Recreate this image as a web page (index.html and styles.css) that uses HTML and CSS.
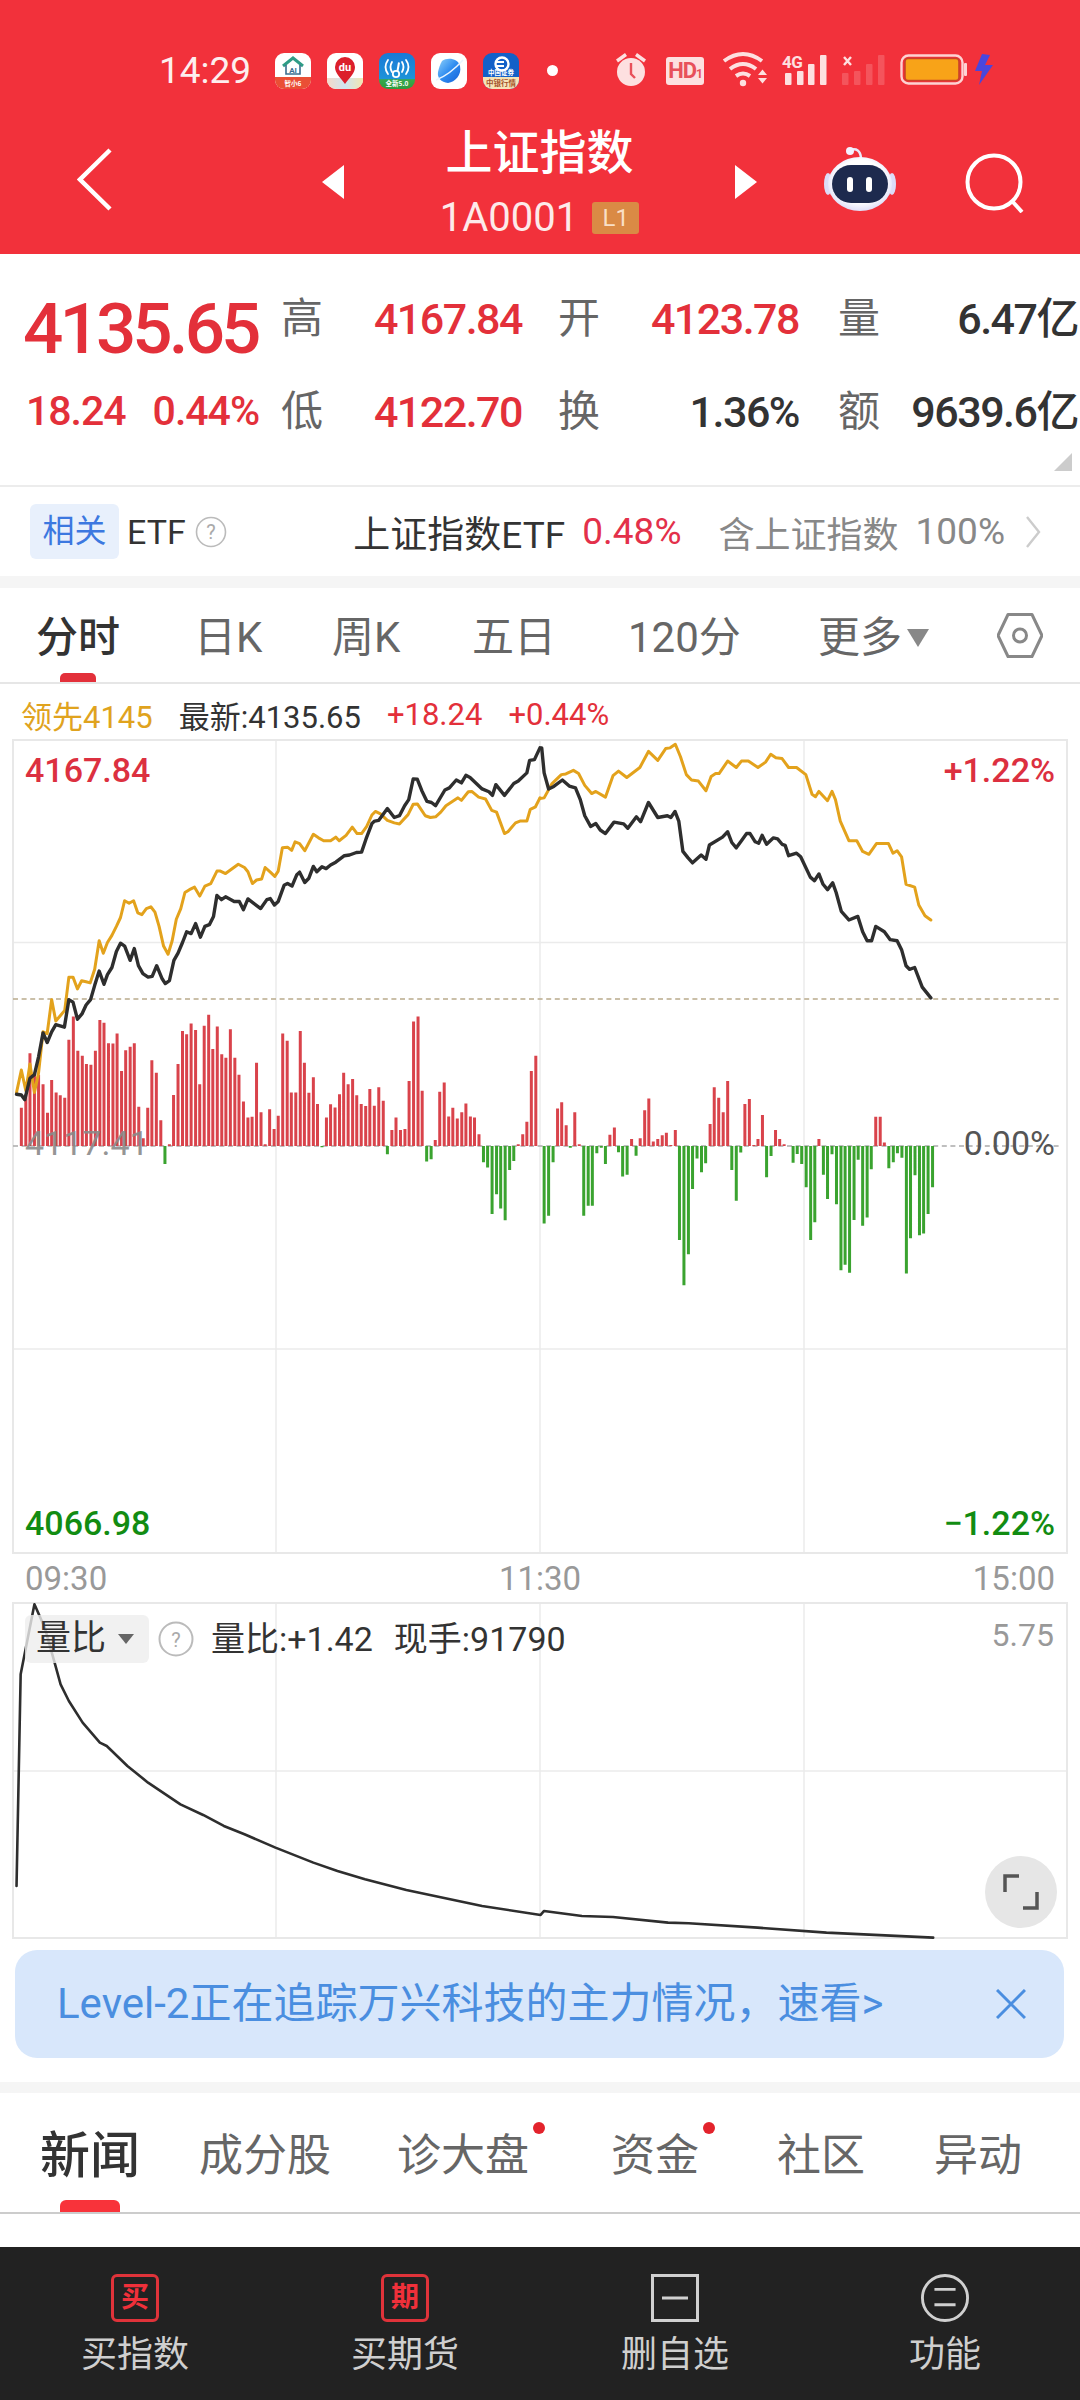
FILE: index.html
```html
<!DOCTYPE html>
<html lang="zh">
<head>
<meta charset="utf-8">
<title>上证指数</title>
<link rel="stylesheet" href="styles.css">
</head>
<body>
<div class="page">
  <header class="top">
    <div class="status">
      <span class="clock">14:29</span>
      <div class="apps">
        <svg class="app" viewBox="0 0 36 36"><rect width="36" height="36" rx="9" fill="#fff"/><path d="M0 24H36V27a9 9 0 0 1-9 9H9a9 9 0 0 1-9-9Z" fill="#ea4f35"/><path d="M8 13 18 5l10 8" fill="none" stroke="#2f9c86" stroke-width="3"/><path d="M11 12V21H25V12" fill="none" stroke="#3a6f8f" stroke-width="1.6"/><text x="18" y="20" class="tiny-ai">AI</text><text x="18" y="33" class="tiny-w">智小6</text></svg>
        <svg class="app" viewBox="0 0 36 36"><defs><linearGradient id="duB" x1="0" x2="1"><stop offset="0" stop-color="#f6d9c8"/><stop offset=".5" stop-color="#cfe4f1"/><stop offset="1" stop-color="#f3e6b0"/></linearGradient></defs><rect width="36" height="36" rx="9" fill="#fff"/><path d="M0 25H36V27a9 9 0 0 1-9 9H9a9 9 0 0 1-9-9Z" fill="url(#duB)"/><path d="M18 31C13 24 8 20 8 14a10 10 0 0 1 20 0c0 6-5 10-10 17Z" fill="#dc1f2b"/><text x="18" y="17.5" class="tiny-du">du</text></svg>
        <svg class="app" viewBox="0 0 36 36"><defs><linearGradient id="wfB" x1="0" y1="0" x2="0" y2="1"><stop offset="0" stop-color="#1b79d6"/><stop offset=".72" stop-color="#1d93d9"/><stop offset=".74" stop-color="#38a84a"/><stop offset="1" stop-color="#2f9a3e"/></linearGradient></defs><rect width="36" height="36" rx="9" fill="url(#wfB)"/><path d="M9 7Q4 14 9 21M13 9Q10 14 13 19M27 7Q32 14 27 21M23 9Q26 14 23 19" fill="none" stroke="#fff" stroke-width="1.8" stroke-linecap="round"/><circle cx="17" cy="21" r="3.2" fill="none" stroke="#fff" stroke-width="1.8"/><path d="M18.5 18 20 9.5" stroke="#fff" stroke-width="2"/><text x="18" y="33" class="tiny-w">全新5.0</text></svg>
        <svg class="app" viewBox="0 0 36 36"><defs><linearGradient id="plB" x1="0" y1="0" x2="1" y2="1"><stop offset="0" stop-color="#8ed0fa"/><stop offset=".5" stop-color="#2f8cf0"/><stop offset="1" stop-color="#1560d8"/></linearGradient></defs><rect width="36" height="36" rx="9" fill="#fff"/><path d="M11 8C16 4 27 5 29 13 31 22 24 29 17 30 10 29 6 25 7 19 8 15 9 11 11 8Z" fill="url(#plB)"/><path d="M5 27C13 24 23 17 32 7" stroke="#e9f4ff" stroke-width="1.4" fill="none"/></svg>
        <svg class="app" viewBox="0 0 36 36"><rect width="36" height="36" rx="9" fill="#1360c8"/><path d="M0 24H36V27a9 9 0 0 1-9 9H9a9 9 0 0 1-9-9Z" fill="#f6e4b8"/><circle cx="19" cy="11" r="6.5" fill="none" stroke="#fff" stroke-width="2.4"/><path d="M12 9H21M12 13H21" stroke="#fff" stroke-width="1.8"/><text x="18" y="22" class="tiny-w">中国证券</text><text x="18" y="33" class="tiny-b">中银行情</text></svg>
      </div>
      <span class="notif-dot"></span>
      <svg class="sys" viewBox="615 52 378 40">
        <g fill="#fde0e0">
          <circle cx="631" cy="73" r="14"/>
          <path d="M617 62 626 55.5M645 62 636 55.5" stroke="#fde0e0" stroke-width="3.4" fill="none"/>
          <rect x="666" y="58" width="38" height="28" rx="3"/>
          <circle cx="743" cy="84" r="3.2"/>
          <path d="M758 76 762.500 70.500 767 76ZM758 79 762.500 84.500 767 79Z"/>
          <path d="M724 62Q743 48 762 62M730 70Q743 60 756 70M736 77Q743 72 750 77" fill="none" stroke="#fde0e0" stroke-width="4"/>
          <rect x="785" y="74" width="6.500" height="12" rx="1"/><rect x="797" y="72" width="6.500" height="14" rx="1"/><rect x="808" y="65" width="6.500" height="21" rx="1"/><rect x="820" y="56" width="6.500" height="30" rx="1"/>
        </g>
        <path d="M631 64V75L635 79" fill="none" stroke="#e8505a" stroke-width="2.400"/>
        <text x="685" y="79" class="sys-hd">HD<tspan class="sys-hd1">1</tspan></text>
        <text x="782" y="69" class="sys-4g">4G</text>
        <g fill="#fde0e0" opacity=".2"><rect x="842" y="74" width="6.500" height="12" rx="1"/><rect x="854" y="72" width="6.500" height="14" rx="1"/><rect x="866" y="65" width="6.500" height="21" rx="1"/><rect x="878" y="56" width="6.500" height="30" rx="1"/></g>
        <path d="M844 58 851 66M851 58 844 66" stroke="#fde0e0" stroke-width="2.400"/>
        <rect x="901.500" y="56.500" width="61" height="28" rx="7" fill="none" stroke="#fdd3d3" stroke-width="2.400"/>
        <rect x="905" y="59.500" width="54" height="22" rx="3" fill="#f8a318" stroke="#c9432a" stroke-width="1.600"/>
        <rect x="964" y="64" width="3" height="13" rx="1" fill="#fdd3d3"/>
        <path d="M982 55 975 72H982L979 86 993 66H985L990 56Z" fill="#4a47dd"/>
      </svg>
    </div>
    <nav class="nav">
      <svg class="back" viewBox="0 0 35 63"><path d="M33 2 3 31.500 33 61" fill="none" stroke="#fff" stroke-width="4.500"/></svg>
      <svg class="tri tri-l" viewBox="0 0 22 34"><path d="M22 0V34L0 17Z" fill="#fff"/></svg>
      <div class="title-block">
        <div class="title">上证指数</div>
        <div class="code"><span>1A0001</span><span class="lvl">L1</span></div>
      </div>
      <svg class="tri tri-r" viewBox="0 0 22 34"><path d="M0 0V34L22 17Z" fill="#fff"/></svg>
      <svg class="robot" viewBox="0 0 72 65">
        <defs><radialGradient id="rbH" cx=".5" cy=".45" r=".6"><stop offset=".65" stop-color="#fff"/><stop offset="1" stop-color="#d4d4f6"/></radialGradient></defs>
        <path d="M26 3Q36 0 37 11" stroke="#e9e9fb" stroke-width="2.500" fill="none"/><circle cx="26" cy="4" r="4" fill="#f4f2ff"/>
        <ellipse cx="4" cy="37" rx="4" ry="11" fill="#dcdcf8"/><ellipse cx="68" cy="37" rx="4" ry="11" fill="#dcdcf8"/>
        <ellipse cx="36" cy="37" rx="32" ry="27" fill="url(#rbH)"/>
        <rect x="8" y="18" width="56" height="38" rx="19" fill="#1d2a4e"/>
        <rect x="23" y="30" width="6" height="15" rx="3" fill="#fff"/><rect x="42" y="30" width="6" height="15" rx="3" fill="#fff"/>
      </svg>
      <svg class="search" viewBox="0 0 60 60"><circle cx="29" cy="29" r="26.500" fill="none" stroke="#fff" stroke-width="4"/><path d="M47 48 57 59" stroke="#fff" stroke-width="4"/></svg>
    </nav>
  </header>

  <section class="quote">
    <div class="price">4135.65</div>
    <div class="lab">高</div><div class="val up">4167.84</div>
    <div class="lab lab-e">开</div><div class="val up">4123.78</div>
    <div class="lab lab-e">量</div><div class="val dark">6.47亿</div>
    <div class="chg"><span>18.24</span><span>0.44%</span></div>
    <div class="lab">低</div><div class="val up">4122.70</div>
    <div class="lab lab-e">换</div><div class="val dark">1.36%</div>
    <div class="lab lab-e">额</div><div class="val dark">9639.6亿</div>
    <span class="corner"></span>
  </section>

  <section class="etf">
    <span class="chip">相关</span>
    <span class="etf-name">ETF</span>
    <svg class="help help-s" viewBox="0 0 32 32"><circle cx="16" cy="16" r="14.500" fill="none" stroke="#bbb" stroke-width="1.600"/><text x="16" y="23" class="help-q">?</text></svg>
    <div class="etf-right">
      <span class="etf-t">上证指数ETF</span>
      <span class="etf-p">0.48%</span>
      <span class="etf-h">含上证指数</span>
      <span class="etf-n">100%</span>
      <svg class="chev" viewBox="0 0 16 32"><path d="M2 1 14 16 2 31" fill="none" stroke="#ccc" stroke-width="2.400"/></svg>
    </div>
  </section>

  <div class="band"></div>

  <section class="periods">
    <span class="per active">分时</span>
    <span class="per">日K</span>
    <span class="per">周K</span>
    <span class="per">五日</span>
    <span class="per">120分</span>
    <span class="per more">更多<i class="caret"></i></span>
    <svg class="hex" viewBox="0 0 46 45"><path d="M11 1.500H35L45 22.500 35 43.500H11L1 22.500Z" fill="none" stroke="#888" stroke-width="3" stroke-linejoin="round"/><circle cx="23" cy="22.500" r="6.500" fill="none" stroke="#888" stroke-width="3"/></svg>
  </section>

  <div class="info">
    <span class="gold">领先4145</span>
    <span class="latest">最新:4135.65</span>
    <span class="up">+18.24</span>
    <span class="up">+0.44%</span>
  </div>

  <svg class="chart" viewBox="0 739 1080 815">
    <g class="grid">
      <path d="M276 740V1553M540 740V1553M804 740V1553M13 942.500H1067M13 1349H1067"/>
      <rect x="13" y="740" width="1054" height="813" class="frame"/>
    </g>
    <path class="dash-tan" d="M13 999H1062"/>
    <path class="dash-gray" d="M13 1146H1060"/>
    <g transform="translate(0 730) scale(.34435 .35714)">
      <path class="bar red" d="M62 1165V1058M75 1165V1020M87 1165V905M100 1165V960M112 1165V965M125 1165V992M138 1165V1072M150 1165V980M163 1165V1015M175 1165V1023M188 1165V1030M200 1165V867M213 1165V802M226 1165V898M239 1165V912M251 1165V935M264 1165V937M277 1165V898M290 1165V812M302 1165V820M315 1165V877M328 1165V878M340 1165V850M353 1165V955M365 1165V897M378 1165V887M390 1165V877M403 1165V1055M416 1165V1143M429 1165V1058M441 1165V925M454 1165V960M467 1165V1093M492 1165V1160M504 1165V1022M517 1165V935M530 1165V843M542 1165V852M555 1165V822M568 1165V840M580 1165V992M593 1165V828M606 1165V797M618 1165V893M631 1165V830M644 1165V908M656 1165V918M669 1165V838M682 1165V918M694 1165V965M707 1165V1040M720 1165V1085M732 1165V1083M745 1165V932M758 1165V1070M770 1165V1160M783 1165V1062M796 1165V1117M808 1165V1080M821 1165V850M834 1165V870M846 1165V1015M859 1165V1015M872 1165V843M884 1165V932M897 1165V1016M910 1165V972M922 1165V1047M948 1165V1085M960 1165V1048M973 1165V1057M986 1165V1020M998 1165V960M1011 1165V992M1024 1165V977M1036 1165V1023M1049 1165V1047M1062 1165V1053M1074 1165V1005M1087 1165V1052M1100 1165V1000M1113 1165V1038M1138 1165V1120M1150 1165V1085M1163 1165V1120M1176 1165V1117M1188 1165V983M1201 1165V816M1214 1165V802M1226 1165V1010M1264 1165V1148M1277 1165V1013M1290 1165V987M1303 1165V1082M1315 1165V1058M1328 1165V1088M1341 1165V1070M1353 1165V1046M1366 1165V1082M1378 1165V1085M1391 1165V1132M1505 1165V1160M1518 1165V1132M1530 1165V1097M1543 1165V955M1556 1165V912"/>
      <path class="bar green" d="M479 1165V1215M935 1165V1168M1125 1165V1188M1239 1165V1208M1252 1165V1202M1404 1165V1210M1416 1165V1225M1429 1165V1355M1442 1165V1300M1454 1165V1340M1467 1165V1373M1480 1165V1232M1492 1165V1207"/>
    </g>
    <g transform="translate(540 730) scale(.34435 .35714)">
      <path class="bar red" d="M51 1165V1060M63 1165V1042M76 1165V1107M101 1165V1070M114 1165V1160M203 1165V1133M216 1165V1113M266 1165V1145M291 1165V1143M304 1165V1065M316 1165V1032M329 1165V1152M342 1165V1145M355 1165V1135M367 1165V1128M380 1165V1162M393 1165V1120M494 1165V1103M506 1165V1000M519 1165V1030M532 1165V1070M545 1165V983M595 1165V1047M608 1165V1033M621 1165V1162M633 1165V1145M646 1165V1078M684 1165V1120M696 1165V1145M709 1165V1160M810 1165V1145M975 1165V1083M988 1165V1083M1000 1165V1155"/>
      <path class="bar green" d="M12 1165V1382M25 1165V1360M38 1165V1210M88 1165V1170M127 1165V1360M140 1165V1332M152 1165V1332M165 1165V1185M178 1165V1170M190 1165V1215M228 1165V1182M240 1165V1250M253 1165V1245M279 1165V1192M405 1165V1428M418 1165V1555M431 1165V1468M443 1165V1285M456 1165V1200M469 1165V1238M481 1165V1213M557 1165V1232M570 1165V1318M583 1165V1183M658 1165V1252M671 1165V1193M735 1165V1212M747 1165V1187M760 1165V1215M773 1165V1280M786 1165V1428M798 1165V1378M823 1165V1245M835 1165V1313M848 1165V1188M861 1165V1328M874 1165V1513M886 1165V1497M899 1165V1520M912 1165V1372M924 1165V1203M937 1165V1388M950 1165V1365M962 1165V1230M1013 1165V1227M1026 1165V1210M1038 1165V1185M1051 1165V1198M1064 1165V1522M1076 1165V1423M1089 1165V1247M1102 1165V1415M1114 1165V1410M1127 1165V1355M1140 1165V1280"/>
    </g>
    <text x="25" y="1155" class="ax ghost">4117.41</text>
    <g transform="translate(0 730) scale(.34435 .35714)">
      <polyline class="line gold-l" points="48,1015 62,952 75,1010 87,935 100,1015 112,960 125,845 137,850 150,755 162,815 175,800 188,785 200,692 212,692 225,725 237,702 250,705 262,708 275,670 288,590 300,625 312,595 325,575 338,550 350,525 362,478 375,485 388,478 400,512 412,517 425,500 438,495 450,510 462,550 475,605 488,628 500,590 512,530 525,500 537,455 550,447 565,440 580,465 595,437 612,430 630,395 640,395 655,402 675,388 692,376 710,385 720,397 733,430 745,420 760,417 770,385 785,398 798,410 808,395 820,330 835,328 847,337 857,313 870,318 885,338 910,292 925,302 940,310 960,310 975,300 985,310 1005,295 1023,272 1037,290 1050,290 1065,270 1080,238 1090,228 1105,235 1125,253 1145,260 1160,263 1185,237 1200,208 1212,207 1235,240 1250,245 1265,243 1280,230 1295,212 1330,190 1340,197 1360,173 1370,172 1390,188 1410,193 1428,225 1442,230 1465,290 1475,285 1497,260 1510,255 1530,255 1540,222 1555,215 1568,190"/>
    </g>
    <g transform="translate(540 730) scale(.34435 .35714)">
      <polyline class="line gold-l" points="0,192 12,190 35,150 62,125 75,123 97,113 112,122 130,155 150,178 162,172 190,188 212,128 228,115 252,133 290,105 315,60 342,85 365,52 378,50 393,40 408,75 425,125 440,140 460,143 482,170 497,130 510,122 520,122 545,87 570,105 585,87 605,87 633,105 655,90 670,68 685,78 703,80 722,105 745,105 772,125 790,180 800,187 810,172 835,198 848,172 858,195 872,255 897,310 920,310 937,340 955,348 977,318 1012,318 1025,345 1037,338 1050,355 1063,432 1088,440 1100,490 1118,520 1135,532"/>
      <polyline class="line black-l" points="5,50 12,120 25,165 40,158 65,140 85,157 103,162 117,195 130,240 147,270 162,262 175,280 190,290 215,258 243,263 255,275 280,243 292,257 315,203 342,245 370,240 380,245 392,228 403,255 415,340 430,358 443,372 468,350 482,362 492,322 530,300 545,285 557,315 570,330 585,310 600,290 610,290 625,313 635,317 645,295 658,320 678,302 690,305 703,320 712,323 722,352 745,345 757,355 785,412 797,422 810,403 822,432 835,447 850,428 860,455 875,508 897,532 923,522 937,565 950,590 963,590 975,550 1000,565 1017,587 1037,590 1050,615 1063,660 1073,670 1088,665 1110,720 1135,750"/>
    </g>
    <g transform="translate(0 730) scale(.34435 .35714)">
      <polyline class="line black-l" points="48,1020 62,1022 72,1035 87,975 100,965 112,915 125,848 137,875 150,845 162,825 187,832 200,755 212,762 225,810 238,795 250,770 263,755 275,715 288,675 302,712 312,685 325,665 338,620 350,597 362,605 378,645 390,612 402,660 415,682 430,692 442,690 455,660 470,695 480,710 492,702 505,645 517,625 530,595 542,565 555,570 568,542 582,580 595,550 608,545 620,522 630,463 643,475 655,467 680,480 695,480 707,503 720,473 757,500 775,475 785,472 797,490 808,480 825,435 835,430 848,437 862,405 870,398 885,427 897,415 910,382 920,397 935,383 947,388 960,378 975,370 1000,352 1015,350 1035,343 1050,342 1063,305 1080,262 1088,255 1100,253 1125,220 1145,245 1160,240 1175,212 1187,195 1200,137 1212,138 1225,170 1240,200 1253,203 1265,212 1292,168 1305,162 1325,140 1340,148 1353,127 1365,133 1400,165 1420,173 1430,183 1440,153 1465,183 1492,150 1505,143 1530,120 1538,85 1552,83 1568,50"/>
    </g>
    <text x="25" y="782" class="ax ax-up">4167.84</text>
    <text x="1055" y="782" class="ax ax-up end">+1.22%</text>
    <text x="1055" y="1155" class="ax ax-zero end">0.00%</text>
    <text x="25" y="1535" class="ax ax-dn">4066.98</text>
    <text x="1055" y="1535" class="ax ax-dn end">−1.22%</text>
  </svg>

  <div class="times"><span>09:30</span><span>11:30</span><span>15:00</span></div>

  <div class="vol">
    <svg class="vol-chart" viewBox="0 1601 1080 338">
      <g class="grid">
        <path d="M276 1602V1937M540 1602V1937M804 1602V1937M13 1770H1067"/>
        <rect x="13" y="1602" width="1054" height="335" class="frame"/>
      </g>
      <g transform="translate(0 1540) scale(.6887 .3333)">
        <polyline class="line vol-l" points="24,1035 30,400 50,190 65,260 80,370 88,430 100,480 120,545 145,605 155,615 185,675 215,725 262,790 295,822 325,855 355,880 400,920 455,965 490,990 530,1015 590,1047 700,1095 785,1122 790,1110 845,1125 890,1128 970,1145 1000,1147 1100,1160 1200,1175 1355,1190"/>
      </g>
      <text x="1054" y="1645" class="ax-time end">5.75</text>
    </svg>
    <div class="vol-bar">
      <span class="vol-chip"><span class="vol-chip-t">量比</span><i class="caret small"></i></span>
      <svg class="help help-b" viewBox="0 0 36 36"><circle cx="18" cy="18" r="16.500" fill="none" stroke="#bbb" stroke-width="2"/><text x="18" y="26" class="help-q">?</text></svg>
      <span class="vol-t">量比:+1.42</span>
      <span class="vol-t">现手:91790</span>
    </div>
    <button class="full"><svg viewBox="0 0 36 36"><path d="M16 2H2V18M20 34H34V18" fill="none" stroke="#555" stroke-width="3.500"/></svg></button>
  </div>

  <div class="banner">
    <span class="banner-t">Level-2正在追踪万兴科技的主力情况，速看&gt;</span>
    <svg class="close" viewBox="0 0 30 30"><path d="M1 1 29 29M29 1 1 29" stroke="#4a8ee0" stroke-width="3"/></svg>
  </div>

  <div class="band band-b"></div>

  <section class="news">
    <span class="nt active">新闻</span>
    <span class="nt">成分股</span>
    <span class="nt"><span class="dotted">诊大盘</span></span>
    <span class="nt"><span class="dotted">资金</span></span>
    <span class="nt">社区</span>
    <span class="nt">异动</span>
  </section>

  <div class="spacer"></div>

  <footer class="foot">
    <div class="ft"><span class="fi red-box"><b>买</b></span><span class="fl">买指数</span></div>
    <div class="ft"><span class="fi red-box"><b>期</b></span><span class="fl">买期货</span></div>
    <div class="ft"><svg class="fsvg" viewBox="0 0 48 48"><rect x="1.500" y="1.500" width="45" height="45" fill="none" stroke="#d0d0d0" stroke-width="3"/><path d="M11 24H37" stroke="#d0d0d0" stroke-width="3"/></svg><span class="fl">删自选</span></div>
    <div class="ft"><svg class="fsvg" viewBox="0 0 50 50"><circle cx="25" cy="25" r="23.500" fill="none" stroke="#d0d0d0" stroke-width="3"/><path d="M14 16H36M14 32H36" stroke="#d0d0d0" stroke-width="3"/></svg><span class="fl">功能</span></div>
  </footer>
</div>
</body>
</html>
```
FILE: styles.css
```css
* { box-sizing: border-box; }
html, body { margin: 0; padding: 0; background: #fff; }
body { font-family: Roboto, "Noto Sans CJK SC", sans-serif; color: #333; }
.page { width: 1080px; height: 2400px; display: flex; flex-direction: column; overflow: hidden; }

/* header */
.top { height: 254px; background: #f2313b; color: #fff; display: flex; flex-direction: column; flex: none; }
.status { height: 106px; padding: 35px 0 0 159px; display: flex; align-items: center; }
.clock { width: 116px; font-size: 37px; line-height: 40px; color: #fdeeee; }
.apps { display: flex; gap: 16px; }
.app { width: 36px; height: 36px; display: block; }
.notif-dot { width: 11px; height: 11px; border-radius: 50%; background: #fff; margin-left: 28px; }
.sys { width: 378px; height: 40px; margin-left: 57px; display: block; }
.sys-hd { font: 700 22px Roboto, sans-serif; fill: #e8505a; text-anchor: middle; letter-spacing: -1px; }
.sys-hd1 { font-size: 12px; }
.sys-4g { font: 700 17px Roboto, sans-serif; fill: #fde0e0; letter-spacing: -.5px; }
.tiny-ai { font: 700 8px Roboto, sans-serif; fill: #3a6f8f; text-anchor: middle; }
.tiny-du { font: 700 11px Roboto, sans-serif; fill: #fff; text-anchor: middle; }
.tiny-w { font: 700 6.500px "Noto Sans CJK SC", sans-serif; fill: #fff; text-anchor: middle; }
.tiny-b { font: 700 7.500px "Noto Sans CJK SC", sans-serif; fill: #a5532a; text-anchor: middle; }

.nav { height: 148px; display: flex; align-items: flex-start; padding-left: 77px; }
.back { width: 35px; height: 63px; margin-top: 42px; flex: none; }
.tri { width: 22px; height: 34px; margin-top: 59px; flex: none; }
.tri-l { margin-left: 210px; }
.title-block { width: 391px; flex: none; display: flex; flex-direction: column; align-items: center; padding-top: 17px; }
.title { font-size: 47px; line-height: 60px; font-weight: 500; }
.code { display: flex; align-items: center; gap: 14px; margin-top: 13px; font-size: 40px; line-height: 44px; color: #fdeaea; }
.lvl { width: 47px; height: 32px; background: #da8a45; border-radius: 3px; color: #f9dfc6; font-size: 24px; line-height: 32px; text-align: center; }
.robot { width: 72px; height: 65px; margin: 41px 0 0 67px; flex: none; }
.search { width: 60px; height: 60px; margin: 47px 0 0 69px; flex: none; }

/* quote */
.quote { position: relative; height: 233px; flex: none; border-bottom: 2px solid #ececec; padding: 18px 0 0 26px; display: grid; grid-template-columns: 255px 41px 200px 78px 199px 81px 198px; grid-auto-rows: 93px; align-items: center; }
.price { font-size: 71px; line-height: 76px; font-weight: 500; color: #e3303a; letter-spacing: -3.900px; margin-left: -3px; margin-top: 21px; }
.chg { display: flex; gap: 27px; font-size: 41px; font-weight: 500; color: #e3303a; letter-spacing: -1px; margin-top: -2px; }
.lab { font-size: 42px; line-height: 50px; color: #666; }
.lab-e { justify-self: end; }
.val { font-size: 43px; line-height: 50px; text-align: right; font-weight: 500; letter-spacing: -1.500px; white-space: nowrap; }
.up { color: #e3303a; }
.dark { color: #333; }
.corner { position: absolute; left: 1054px; top: 199px; width: 0; height: 0; border-left: 18px solid transparent; border-bottom: 18px solid #ccc; }

/* etf */
.etf { height: 89px; flex: none; display: flex; align-items: center; padding: 0 39px 0 30px; }
.chip { width: 89px; height: 55px; background: #e8f0fc; border-radius: 6px; color: #3c78e0; font-size: 32px; line-height: 55px; text-align: center; }
.etf-name { font-size: 34px; margin-left: 8px; color: #333; }
.help { display: block; flex: none; }
.help-s { width: 32px; height: 32px; margin-left: 9px; }
.help-q { font: 400 20px Roboto, sans-serif; fill: #aaa; text-anchor: middle; }
.etf-right { margin-left: auto; display: flex; align-items: center; font-size: 37px; white-space: nowrap; }
.etf-t { color: #333; }
.etf-p { color: #e3304a; margin-left: 17px; }
.etf-h { color: #888; margin-left: 37px; font-size: 36px; }
.etf-n { color: #888; margin-left: 17px; }
.chev { width: 16px; height: 32px; margin-left: 20px; }

.band { height: 12px; background: #f5f5f5; flex: none; }
.band-b { height: 11px; margin-top: 24px; }

/* period tabs */
.periods { height: 96px; flex: none; display: grid; grid-template-columns: 158px 138px 140px 156px 190px 177px 46px; padding-left: 36px; align-items: center; border-bottom: 2px solid #e6e6e6; }
.per { position: relative; font-size: 42px; line-height: 100px; color: #666; height: 94px; white-space: nowrap; }
.per.active { color: #333; font-weight: 500; }
.per.active::after { content: ""; position: absolute; left: 24px; top: 85px; width: 36px; height: 9px; background: #e3303a; border-radius: 5px 5px 0 0; }
.more { display: flex; align-items: center; padding-top: 5px; }
.caret { display: inline-block; width: 0; height: 0; margin-left: 5px; border-left: 11px solid transparent; border-right: 11px solid transparent; border-top: 18px solid #888; }
.caret.small { margin-left: 12px; border-left-width: 8px; border-right-width: 8px; border-top: 10px solid #666; }
.hex { width: 46px; height: 45px; display: block; margin-left: 2px; }

.info { height: 55px; flex: none; display: flex; align-items: center; gap: 26px; padding: 6px 0 0 21px; font-size: 31px; }
.gold { color: #e0a31e; }
.latest { color: #333; }

/* charts */
.chart { width: 1080px; height: 815px; display: block; flex: none; }
.grid path { fill: none; stroke: #ebebeb; stroke-width: 1.500; }
.frame { fill: none; stroke: #e8e8e8; stroke-width: 2; }
.dash-tan { stroke: #b9aa8c; stroke-width: 1.500; stroke-dasharray: 5 3.600; fill: none; }
.dash-gray { stroke: #aaa; stroke-width: 1.500; stroke-dasharray: 5 3.600; fill: none; }
.bar { fill: none; stroke-width: 3; vector-effect: non-scaling-stroke; }
.red { stroke: #d9434b; }
.green { stroke: #3aa32f; }
.line { fill: none; vector-effect: non-scaling-stroke; stroke-linejoin: round; stroke-linecap: round; }
.gold-l { stroke: #e3a21c; stroke-width: 3; }
.black-l { stroke: #2e2e2e; stroke-width: 3.400; }
.vol-l { stroke: #2e2e2e; stroke-width: 2.600; }
.ax { font-family: Roboto, sans-serif; font-size: 34px; }
.ax-up { fill: #dc3040; font-weight: 500; }
.ax-dn { fill: #128c12; font-weight: 500; }
.ax-zero { fill: #555; }
.ghost { fill: #8a8a8a; opacity: .9; }
.end { text-anchor: end; }

.times { height: 48px; flex: none; display: flex; justify-content: space-between; align-items: center; padding: 0 25px; font-size: 33px; color: #999; }
.vol { position: relative; height: 338px; flex: none; }
.vol-chart { width: 1080px; height: 338px; display: block; }
.ax-time { font-family: Roboto, sans-serif; font-size: 32px; fill: #999; }
.vol-bar { position: absolute; left: 25px; top: 13px; display: flex; align-items: center; }
.vol-chip { width: 124px; height: 48px; padding-left: 11px; background: rgba(238, 238, 238, .8); border-radius: 6px; display: flex; align-items: center; font-size: 35px; color: #333; }
.vol-chip-t { line-height: 44px; }
.help-b { width: 36px; height: 36px; margin: 0 17px 0 9px; }
.vol-t { font-size: 34px; line-height: 44px; color: #333; margin-right: 21px; white-space: nowrap; }
.full { position: absolute; left: 985px; top: 254px; width: 72px; height: 72px; padding: 18px; border: 0; border-radius: 50%; background: #e6e6e6; }
.full svg { width: 36px; height: 36px; display: block; }

.banner { margin: 10px 16px 0 15px; height: 108px; flex: none; background: #d8e7fb; border-radius: 22px; display: flex; align-items: center; justify-content: space-between; padding: 0 38px 0 42px; }
.banner-t { font-size: 42px; line-height: 60px; margin-top: -1px; color: #4a8ee0; white-space: nowrap; }
.close { width: 30px; height: 30px; display: block; }

/* news */
.news { height: 121px; flex: none; display: grid; grid-template-columns: 159px 198px 214px 166px 157px 1fr; padding: 0 0 0 40px; align-items: center; border-bottom: 2px solid #ccc; }
.nt { position: relative; font-size: 44px; line-height: 126px; height: 119px; color: #666; white-space: nowrap; }
.nt.active { font-size: 50px; color: #333; font-weight: 500; }
.nt.active::after { content: ""; position: absolute; left: 20px; top: 107px; width: 60px; height: 12px; background: #f8333a; border-radius: 6px 6px 0 0; }
.dotted { position: relative; display: inline-block; line-height: 56px; }
.dotted::after { content: ""; position: absolute; right: -16px; top: -6px; width: 12px; height: 12px; border-radius: 50%; background: #e3232c; }
.spacer { height: 33px; flex: none; }

.foot { flex: 1; background: #222; display: grid; grid-template-columns: repeat(4, 270px); padding-top: 27px; }
.ft { display: flex; flex-direction: column; align-items: center; }
.fi { width: 48px; height: 48px; display: flex; align-items: center; justify-content: center; }
.red-box { border: 3px solid #e0333a; border-radius: 6px; color: #f0303a; font-size: 28px; line-height: 1; }
.fsvg { width: 48px; height: 48px; display: block; }
.fl { margin-top: 10px; font-size: 36px; line-height: 46px; color: #cfcfcf; }
```
